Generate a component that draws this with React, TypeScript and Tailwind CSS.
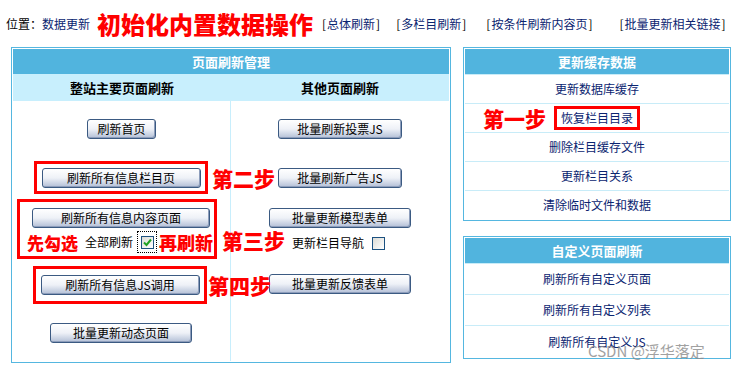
import React from "react";

const Btn = ({ className = "", children }: { className?: string; children: React.ReactNode }) => (
  <button
    className={`h-[20px] shrink-0 rounded-[3px] border border-[#3b5a82] bg-linear-to-b from-white via-[#eef1f7] to-[#b3bfd6] text-[12px] leading-none text-black shadow-[inset_-1px_-1px_0_#8d9dbb] ${className}`}
  >
    {children}
  </button>
);

const Check = ({ checked = false }: { checked?: boolean }) => (
  <span className="flex h-[13px] w-[13px] items-center justify-center border border-[#1c5180] bg-linear-to-br from-[#dcdcd6] to-white">
    {checked && (
      <svg width="9" height="9" viewBox="0 0 9 9">
        <path d="M1 4.5 L3.5 7 L8 1.5" fill="none" stroke="#21a121" strokeWidth="2" />
      </svg>
    )}
  </span>
);

const Note = ({ className = "", children }: { className?: string; children: React.ReactNode }) => (
  <span className={`font-black leading-none text-[#ff0000] ${className}`}>{children}</span>
);

const Link = ({ children, className = "" }: { children: React.ReactNode; className?: string }) => (
  <span className={`text-black ${className}`}>
    <span className="px-px">[</span>
    <span className="text-[#0a2470]">{children}</span>
    <span className="px-px">]</span>
  </span>
);

const Panel = ({ title, children }: { title: string; children: React.ReactNode }) => (
  <div className="border border-[#55b7e0] bg-white p-px">
    <div className="flex h-[25px] items-center justify-center bg-[#51b4de] text-[13px] font-bold text-white">
      {title}
    </div>
    {children}
  </div>
);

const Row = ({ className = "h-[29px]", children }: { className?: string; children: React.ReactNode }) => (
  <div className={`relative flex items-center justify-center border-t border-[#c8ecf8] text-[12px] text-[#0a2470] ${className}`}>
    {children}
  </div>
);

export default function App() {
  return (
    <div className="relative h-[370px] w-[739px] overflow-hidden bg-white font-['Noto_Sans_CJK_SC',sans-serif] text-[12px]">
      {/* top line */}
      <div className="flex h-[47px] items-center pl-[6px] whitespace-nowrap">
        <span className="text-black">位置：</span>
        <span className="text-[#0a2470]">数据更新</span>
        <Note className="ml-[7px] text-[24px]">初始化内置数据操作</Note>
        <Link className="ml-[8px]">总体刷新</Link>
        <Link className="ml-[14px]">多栏目刷新</Link>
        <Link className="ml-[18px]">按条件刷新内容页</Link>
        <Link className="ml-[25px]">批量更新相关链接</Link>
      </div>

      <div className="flex items-start gap-[12px] pl-[11px]">
        {/* left panel */}
        <div className="w-[440px] border border-[#55b7e0] bg-white p-px">
          <div className="flex h-[25px] items-center justify-center bg-[#51b4de] text-[13px] font-bold text-white">
            页面刷新管理
          </div>
          <div className="grid h-[27px] grid-cols-2 bg-[#c8effd] text-[13px] font-bold text-black">
            <div className="flex items-center justify-center">整站主要页面刷新</div>
            <div className="flex items-center justify-center">其他页面刷新</div>
          </div>
          <div className="relative grid h-[260px] grid-cols-2">
            <div className="flex flex-col items-start border-r border-[#c8eefc]">
              <Btn className="ml-[74px] mt-[18px] w-[69px]">刷新首页</Btn>
              <div className="ml-[21px] mt-[22px] flex h-[33px] w-[174px] items-center justify-center border-[3px] border-[#ff0000]">
                <Btn className="w-[159px]">刷新所有信息栏目页</Btn>
              </div>
              <div className="ml-[4px] mt-[5px] flex h-[60px] w-[200px] flex-col items-start border-[3px] border-[#ff0000]">
                <Btn className="ml-[12px] mt-[6px] w-[178px]">刷新所有信息内容页面</Btn>
                <div className="mt-[3px] flex h-[22px] items-center pl-[7px] whitespace-nowrap">
                  <Note className="text-[17px]">先勾选</Note>
                  <span className="ml-[7px] text-black">全部刷新</span>
                  <span className="ml-[4px] flex h-[22px] w-[20px] items-center justify-center border border-dotted border-black">
                    <Check checked />
                  </span>
                  <Note className="ml-[2px] text-[18px]">再刷新</Note>
                </div>
              </div>
              <div className="ml-[20px] mt-[7px] flex h-[38px] w-[174px] items-center justify-center border-[3px] border-[#ff0000]">
                <Btn className="w-[159px]">刷新所有信息JS调用</Btn>
              </div>
              <Btn className="ml-[37px] mt-[19px] w-[142px]">批量更新动态页面</Btn>
            </div>
            <div className="flex flex-col items-start">
              <Btn className="ml-[47px] mt-[18px] w-[124px]">批量刷新投票JS</Btn>
              <Btn className="ml-[47px] mt-[29px] w-[124px]">批量刷新广告JS</Btn>
              <Btn className="ml-[38px] mt-[20px] w-[142px]">批量更新模型表单</Btn>
              <div className="ml-[61px] mt-[8px] flex h-[14px] items-center whitespace-nowrap">
                <span className="text-black">更新栏目导航</span>
                <span className="ml-[8px]">
                  <Check />
                </span>
              </div>
              <Btn className="ml-[38px] mt-[24px] w-[142px]">批量更新反馈表单</Btn>
            </div>

            <Note className="absolute left-[199px] top-[67px] text-[21px]">第二步</Note>
            <Note className="absolute left-[209px] top-[129px] text-[21px]">第三步</Note>
            <Note className="absolute left-[195px] top-[174px] text-[21px]">第四步</Note>
          </div>
        </div>

        {/* right column */}
        <div className="flex w-[268px] flex-col">
          <Panel title="更新缓存数据">
            <Row>更新数据库缓存</Row>
            <Row>
              <Note className="absolute left-[18px] top-[4px] text-[21px]">第一步</Note>
              <span className="flex h-[24px] items-center border-[3px] border-[#ff0000] px-[4px]">恢复栏目目录</span>
            </Row>
            <Row>删除栏目缓存文件</Row>
            <Row>更新栏目关系</Row>
            <Row>清除临时文件和数据</Row>
          </Panel>
          <div className="mt-[15px]">
            <Panel title="自定义页面刷新">
              <Row className="h-[31px]">刷新所有自定义页面</Row>
              <Row className="h-[31px]">刷新所有自定义列表</Row>
              <Row className="h-[32px]">刷新所有自定义JS</Row>
            </Panel>
          </div>
        </div>
      </div>

      <span className="absolute left-[588px] top-[343px] text-[15px] leading-none text-[#8a8a8a] opacity-80">
        CSDN @浮华落定
      </span>
    </div>
  );
}
